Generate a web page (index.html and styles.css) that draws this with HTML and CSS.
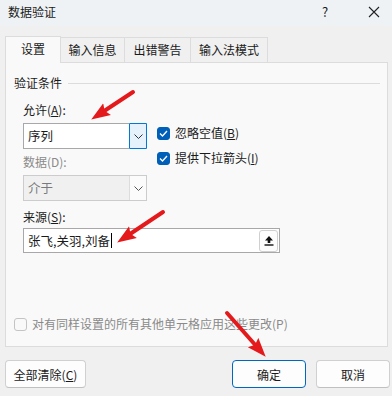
FILE: index.html
```html
<!DOCTYPE html>
<html lang="zh-CN">
<head>
<meta charset="utf-8">
<title>数据验证</title>
<link rel="stylesheet" href="styles.css">
</head>
<body>
<div class="dialog">
  <div class="titlebar">
    <span class="title">数据验证</span>
    <span class="help">?</span>
    <span class="close"><svg width="12" height="12" viewBox="0 0 12 12"><path d="M1 1 L11 11 M11 1 L1 11" stroke="#222" stroke-width="1.1" fill="none"/></svg></span>
  </div>
  <div class="tabs">
    <div class="tab active">设置</div>
    <div class="tab">输入信息</div>
    <div class="tab">出错警告</div>
    <div class="tab">输入法模式</div>
  </div>
  <div class="panel">
    <div class="group-title"><span>验证条件</span><span class="rule"></span></div>
    <div class="criteria">
      <div class="col">
        <div class="label">允许(<u>A</u>):</div>
        <div class="combo">
          <span class="value">序列</span>
          <span class="drop focus"><svg width="9" height="5" viewBox="0 0 9 5"><path d="M0.5 0.5 L4.5 4.5 L8.5 0.5" stroke="#333" stroke-width="1" fill="none"/></svg></span>
        </div>
        <div class="label disabled gap-top">数据(D):</div>
        <div class="combo off">
          <span class="value">介于</span>
          <span class="drop"><svg width="9" height="5" viewBox="0 0 9 5"><path d="M0.5 0.5 L4.5 4.5 L8.5 0.5" stroke="#555" stroke-width="1" fill="none"/></svg></span>
        </div>
      </div>
      <div class="checks">
        <label class="check"><span class="box on"><svg width="9" height="7" viewBox="0 0 9 7"><path d="M1 3.5 L3.5 6 L8 1" stroke="#fff" stroke-width="1.3" fill="none"/></svg></span><span>忽略空值(<u>B</u>)</span></label>
        <label class="check"><span class="box on"><svg width="9" height="7" viewBox="0 0 9 7"><path d="M1 3.5 L3.5 6 L8 1" stroke="#fff" stroke-width="1.3" fill="none"/></svg></span><span>提供下拉箭头(<u>I</u>)</span></label>
      </div>
    </div>
    <div class="label src-label">来源(<u>S</u>):</div>
    <div class="source">
      <span class="value">张飞,关羽,刘备<span class="caret"></span></span>
      <span class="pick"><svg width="10" height="11" viewBox="0 0 10 11"><path d="M5 1 L9 5.5 L6.3 5.5 L6.3 8 L3.7 8 L3.7 5.5 L1 5.5 Z" fill="#111"/><rect x="0.5" y="9.3" width="9" height="1.4" fill="#111"/></svg></span>
    </div>
    <label class="check apply"><span class="box"></span><span>对有同样设置的所有其他单元格应用这些更改(P)</span></label>
  </div>
  <div class="buttons">
    <button class="btn">全部清除(<u>C</u>)</button>
    <span class="spacer"></span>
    <button class="btn primary">确定</button>
    <button class="btn">取消</button>
  </div>
  <svg class="arrows" width="392" height="396" viewBox="0 0 392 396">
    <defs>
      <marker id="head" markerUnits="userSpaceOnUse" markerWidth="20" markerHeight="16" refX="8" refY="8" orient="auto">
        <path d="M0 1 L19 8 L0 15 L3 8 Z" fill="#e3191c"/>
      </marker>
    </defs>
    <line x1="133" y1="92" x2="100.4" y2="113.5" stroke="#e3191c" stroke-width="4" stroke-linecap="round" marker-end="url(#head)"/>
    <line x1="163" y1="212" x2="126.3" y2="236.5" stroke="#e3191c" stroke-width="4" stroke-linecap="round" marker-end="url(#head)"/>
    <line x1="227" y1="313" x2="258.4" y2="348.5" stroke="#e3191c" stroke-width="4" stroke-linecap="round" marker-end="url(#head)"/>
  </svg>
</div>
</body>
</html>
```

FILE: styles.css
```css
* { box-sizing: border-box; }
html, body { margin: 0; padding: 0; }
body {
  background: #f0f0f0;
  font-family: "Noto Sans CJK SC", "Noto Sans", sans-serif;
  font-size: 12px;
  color: #1a1a1a;
}
.dialog {
  position: relative;
  width: 392px;
  height: 396px;
  overflow: hidden;
  background: #f0f0f0;
}
.titlebar {
  height: 26px;
  background: #eef2f5;
  display: flex;
  align-items: center;
  padding: 0 0 0 8px;
  line-height: 16px;
}
.title { flex: 1; font-size: 12px; margin-top: -2px; }
.help { width: 46px; text-align: left; font-size: 13px; margin-top: -2px; }
.close { width: 24px; display: flex; align-items: center; margin-top: -2px; }
.tabs {
  display: flex;
  align-items: flex-end;
  padding-left: 5px;
  margin-top: 10px;
  height: 26px;
}
.tab {
  height: 25px;
  line-height: 24px;
  padding: 0;
  white-space: nowrap;
  border: 1px solid #dcdcdc;
  border-bottom: none;
  border-left: none;
  background: #f0f0f0;
  text-align: center;
}
.tab.active {
  height: 27px;
  width: 56px;
  border-left: 1px solid #dcdcdc;
  background: #f9f9f9;
  position: relative;
  z-index: 1;
  margin-bottom: -1px;
}
.tab:nth-child(2) { width: 64px; }
.tab:nth-child(3) { width: 66px; }
.tab:nth-child(4) { width: 77px; }
.panel {
  margin: 0 4px 0 5px;
  height: 285px;
  border: 1px solid #dcdcdc;
  background: #f9f9f9;
  display: flex;
  flex-direction: column;
  padding: 12px 0 0 8px;
}
.group-title {
  display: flex;
  align-items: center;
  line-height: 16px;
  color: #1a1a1a;
}
.rule {
  flex: 1;
  height: 1px;
  background: #dcdcdc;
  margin: 1px 7px 0 6px;
}
.criteria {
  display: flex;
  gap: 10px;
  margin-top: 11px;
  padding-left: 9px;
}
.col { width: 124px; }
.label { line-height: 16px; height: 16px; }
.label u, .check u, .btn u { text-decoration: underline; text-underline-offset: 1px; }
.disabled { color: #8a8a8a; }
.gap-top { margin-top: 5px; }
.combo {
  margin-top: 5px;
  height: 26px;
  border: 1px solid #a8a8a8;
  background: #fff;
  display: flex;
  align-items: stretch;
}
.combo .value { flex: 1; padding-left: 4px; line-height: 24px; font-size: 12.5px; }
.drop {
  width: 17px;
  display: flex;
  align-items: center;
  justify-content: center;
  border-left: 1px solid #d6d6d6;
}
.drop.focus {
  background: #e5f1fb;
  border: 1px solid #0078d7;
  margin: -1px -1px -1px 0;
  width: 18px;
  border-radius: 1px;
}
.combo.off { background: #f0f0f0; border-color: #cccccc; }
.combo.off .value { color: #7a7a7a; }
.combo.off .drop { background: #fbfbfb; border-left-color: #dcdcdc; }
.checks {
  padding-top: 23px;
  display: flex;
  flex-direction: column;
  gap: 9px;
}
.check {
  display: flex;
  align-items: center;
  line-height: 16px;
  gap: 5px;
}
.box {
  width: 13px;
  height: 13px;
  border-radius: 3px;
  border: 1px solid #8e8e8e;
  background: #fdfdfd;
  display: flex;
  align-items: center;
  justify-content: center;
}
.box.on { background: #005fb8; border-color: #005fb8; }
.src-label { margin-top: 8px; padding-left: 9px; }
.source {
  margin: 3px 0 0 9px;
  width: 257px;
  height: 25px;
  border: 1px solid #a8a8a8;
  background: #fff;
  display: flex;
  align-items: center;
  padding-right: 1px;
}
.source .value { flex: 1; padding-left: 4px; font-size: 12.5px; display: flex; align-items: center; }
.caret { display: inline-block; width: 1px; height: 15px; background: #000; margin-left: 1px; }
.pick {
  width: 19px;
  height: 22px;
  border: 1px solid #d0d0d0;
  border-radius: 3px;
  background: #fdfdfd;
  display: flex;
  align-items: center;
  justify-content: center;
}
.apply {
  margin-top: auto;
  margin-bottom: 14px;
  color: #8a8a8a;
}
.apply .box { border-color: #c4c4c4; background: #f9f9f9; }
.buttons {
  display: flex;
  margin: 13px 0 0 5px;
  gap: 10px;
}
.spacer { flex: 1; }
.btn {
  height: 28px;
  font-family: inherit;
  font-size: 12px;
  color: #1a1a1a;
  background: #fdfdfd;
  border: 1px solid #d0d0d0;
  border-bottom-color: #c0c0c0;
  border-radius: 4px;
  padding: 0;
  width: 74px;
}
.btn:first-child { width: 81px; }
.btn.primary { border-color: #0067c0; }
.btn:last-child { margin-right: 2px; }
.arrows {
  position: absolute;
  left: 0;
  top: 0;
  pointer-events: none;
}
```
